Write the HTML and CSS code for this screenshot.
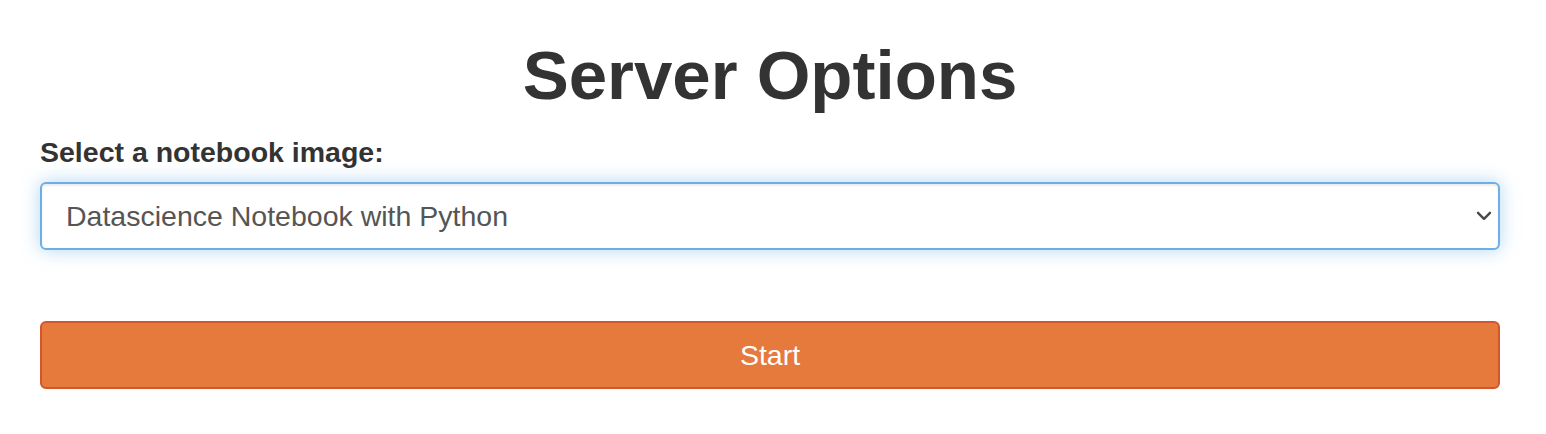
FILE: index.html
```html
<!DOCTYPE html>
<html lang="en">
<head>
<meta charset="utf-8">
<title>Server Options</title>
<link rel="stylesheet" href="styles.css">
</head>
<body>
<main class="container">
  <h1 class="title">Server Options</h1>
  <form class="spawn-form">
    <label class="field-label" for="image">Select a notebook image:</label>
    <div class="select-wrap">
      <select id="image" class="form-select">
        <option>Datascience Notebook with Python</option>
      </select>
      <svg class="chevron" width="16" height="10" viewBox="0 0 16 10" aria-hidden="true">
        <path d="M2 1.8 L8 7.8 L14 1.8" fill="none" stroke="#4a4a4a" stroke-width="2.4" stroke-linecap="round" stroke-linejoin="round"/>
      </svg>
    </div>
    <button type="button" class="btn-start">Start</button>
  </form>
</main>
</body>
</html>
```

FILE: styles.css
```css
* { box-sizing: border-box; }

html, body {
  margin: 0;
  padding: 0;
  background: #ffffff;
}

body {
  font-family: "Liberation Sans", Arial, Helvetica, sans-serif;
  color: #333333;
}

.container {
  padding: 36px 46px 0 40px;
  display: flex;
  flex-direction: column;
}

.title {
  margin: 0;
  font-size: 69px;
  line-height: 79px;
  font-weight: 700;
  text-align: center;
  color: #333333;
}

.spawn-form {
  display: flex;
  flex-direction: column;
  margin-top: 17px;
}

.field-label {
  font-size: 28.5px;
  line-height: 40px;
  font-weight: 700;
  color: #333333;
  margin-bottom: 10px;
}

.select-wrap {
  position: relative;
}

.form-select {
  display: block;
  width: 100%;
  height: 68px;
  padding: 12px 24px;
  font-family: "Liberation Sans", Arial, Helvetica, sans-serif;
  font-size: 28.5px;
  line-height: 40px;
  color: #555555;
  background: #ffffff;
  border: 2px solid #6eaee6;
  border-radius: 6px;
  box-shadow: inset 0 2px 2px rgba(0, 0, 0, 0.075), 0 0 18px rgba(102, 175, 233, 0.5);
  appearance: none;
  -webkit-appearance: none;
  outline: none;
}

.chevron {
  position: absolute;
  right: 8px;
  top: 29px;
  pointer-events: none;
}

.btn-start {
  margin-top: 71px;
  width: 100%;
  height: 68px;
  padding: 12px 24px;
  font-family: "Liberation Sans", Arial, Helvetica, sans-serif;
  font-size: 28.5px;
  line-height: 40px;
  color: #ffffff;
  background: #e57a3c;
  border: 2px solid #d2552b;
  border-radius: 6px;
  cursor: pointer;
}
```
